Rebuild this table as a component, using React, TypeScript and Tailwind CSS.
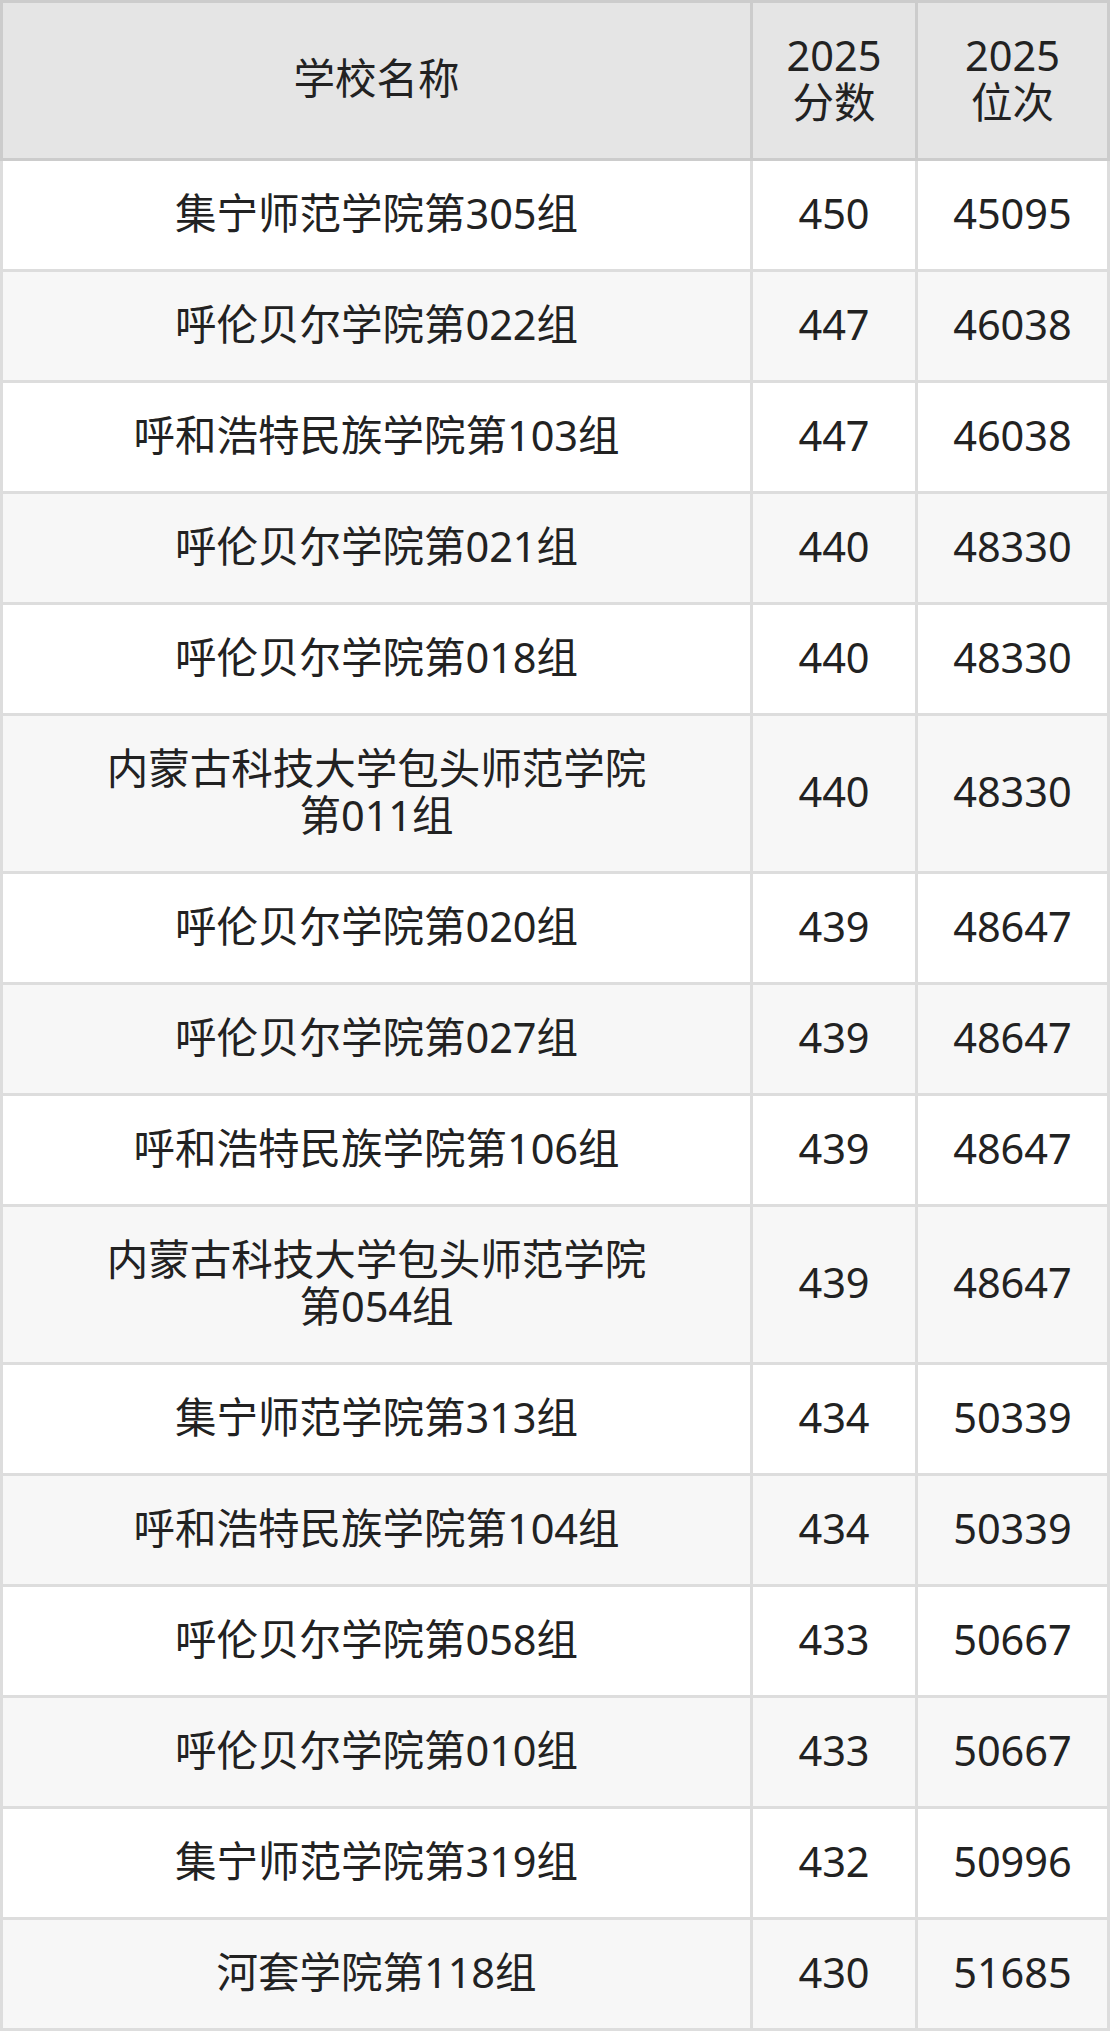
import React from 'react';

interface Row {
  name: string;
  score: string;
  rank: string;
}

const rows: Row[] = [
  { name: '集宁师范学院第305组', score: '450', rank: '45095' },
  { name: '呼伦贝尔学院第022组', score: '447', rank: '46038' },
  { name: '呼和浩特民族学院第103组', score: '447', rank: '46038' },
  { name: '呼伦贝尔学院第021组', score: '440', rank: '48330' },
  { name: '呼伦贝尔学院第018组', score: '440', rank: '48330' },
  { name: '内蒙古科技大学包头师范学院第011组', score: '440', rank: '48330' },
  { name: '呼伦贝尔学院第020组', score: '439', rank: '48647' },
  { name: '呼伦贝尔学院第027组', score: '439', rank: '48647' },
  { name: '呼和浩特民族学院第106组', score: '439', rank: '48647' },
  { name: '内蒙古科技大学包头师范学院第054组', score: '439', rank: '48647' },
  { name: '集宁师范学院第313组', score: '434', rank: '50339' },
  { name: '呼和浩特民族学院第104组', score: '434', rank: '50339' },
  { name: '呼伦贝尔学院第058组', score: '433', rank: '50667' },
  { name: '呼伦贝尔学院第010组', score: '433', rank: '50667' },
  { name: '集宁师范学院第319组', score: '432', rank: '50996' },
  { name: '河套学院第118组', score: '430', rank: '51685' },
];

const cell =
  'flex items-center justify-center text-center pt-[28.5px] pb-[32.5px] px-[16px] border-r-[3px] border-b-[3px]';

export default function App() {
  return (
    <div
      className="w-[1110px] text-[41.5px] leading-[47px] text-[#222]"
      style={{ fontFamily: '"Noto Sans", "Noto Sans CJK SC", sans-serif' }}
    >
      <div className="grid grid-cols-[753px_165px_192px]">
        {/* header */}
        <div className={`${cell} bg-[#e5e5e5] border-[#cccccc] border-l-[3px] border-t-[3px]`}>
          学校名称
        </div>
        <div className={`${cell} bg-[#e5e5e5] border-[#cccccc] border-t-[3px]`}>
          2025
          <br />
          分数
        </div>
        <div className={`${cell} bg-[#e5e5e5] border-[#cccccc] border-t-[3px]`}>
          2025
          <br />
          位次
        </div>

        {rows.map((r, i) => {
          const bg = i % 2 === 1 ? 'bg-[#f7f7f7]' : 'bg-white';
          return (
            <React.Fragment key={i}>
              <div className={`${cell} ${bg} border-[#dddddd] border-l-[3px] !px-[95px]`}>
                {r.name}
              </div>
              <div className={`${cell} ${bg} border-[#dddddd]`}>{r.score}</div>
              <div className={`${cell} ${bg} border-[#dddddd]`}>{r.rank}</div>
            </React.Fragment>
          );
        })}
      </div>
    </div>
  );
}
